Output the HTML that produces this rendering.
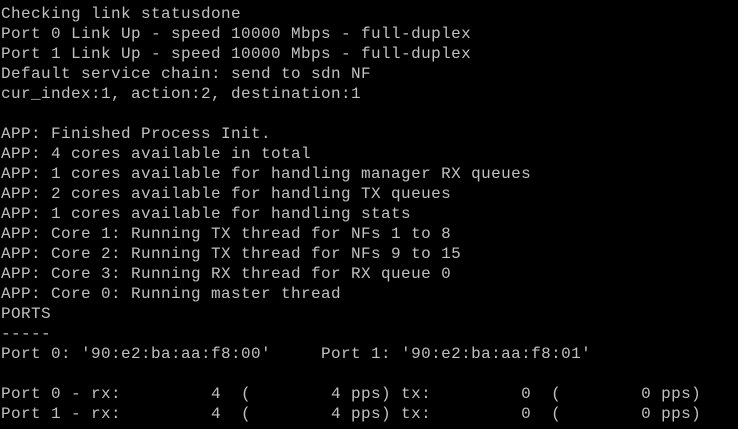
<!DOCTYPE html><html><head><style>
html,body{margin:0;padding:0;background:#000;width:738px;height:429px;overflow:hidden}
pre{margin:0;padding:4px 0 0 1px;font-family:"Liberation Mono",monospace;font-size:16px;letter-spacing:0.4px;line-height:20px;color:#c0c0c0}
</style></head><body><pre>Checking link statusdone
Port 0 Link Up - speed 10000 Mbps - full-duplex
Port 1 Link Up - speed 10000 Mbps - full-duplex
Default service chain: send to sdn NF
cur_index:1, action:2, destination:1

APP: Finished Process Init.
APP: 4 cores available in total
APP: 1 cores available for handling manager RX queues
APP: 2 cores available for handling TX queues
APP: 1 cores available for handling stats
APP: Core 1: Running TX thread for NFs 1 to 8
APP: Core 2: Running TX thread for NFs 9 to 15
APP: Core 3: Running RX thread for RX queue 0
APP: Core 0: Running master thread
PORTS
-----
Port 0: '90:e2:ba:aa:f8:00'     Port 1: '90:e2:ba:aa:f8:01'

Port 0 - rx:         4  (        4 pps) tx:         0  (        0 pps)
Port 1 - rx:         4  (        4 pps) tx:         0  (        0 pps)</pre></body></html>
